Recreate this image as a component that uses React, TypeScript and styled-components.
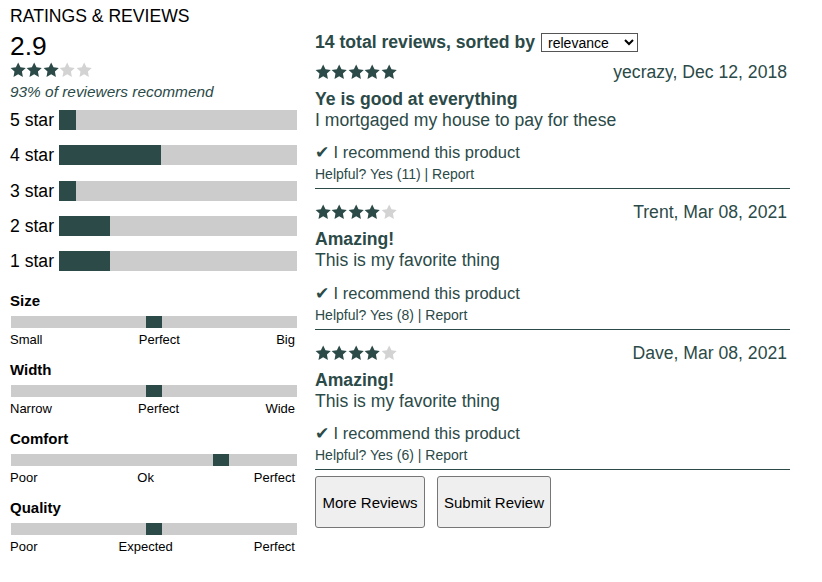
import React from "react";
import styled, { createGlobalStyle } from "styled-components";

const GREEN = "#2b4a48";
const GREY = "#cccccc";

const GlobalStyle = createGlobalStyle`
  body {
    margin: 0;
    background: #ffffff;
    font-family: "Liberation Sans", Arial, sans-serif;
  }
`;

const Page = styled.div`
  padding: 6px 10px 0 10px;
  color: #000;
`;

const Heading = styled.h2`
  margin: 0;
  font-size: 17.6px;
  line-height: 20px;
  font-weight: normal;
`;

const Columns = styled.div`
  display: grid;
  grid-template-columns: 287px 475px;
  column-gap: 18px;
  align-items: start;
`;

const Left = styled.section`
  display: flex;
  flex-direction: column;
`;

const Average = styled.div`
  margin-top: 5px;
  font-size: 26.4px;
  line-height: 30px;
`;

const StarRow = styled.div<{ $top?: number }>`
  display: flex;
  margin-top: ${(p) => p.$top ?? 0}px;
  height: 16px;
`;

const StarSvg = styled.svg<{ $on: boolean }>`
  width: 16.4px;
  height: 16px;
  fill: ${(p) => (p.$on ? GREEN : "#d3d3d3")};
`;

const Recommend = styled.div`
  margin-top: 5px;
  font-size: 15.4px;
  line-height: 18px;
  font-style: italic;
  color: ${GREEN};
`;

const Breakdown = styled.div`
  margin-top: 9px;
  display: grid;
  grid-template-columns: 49px 1fr;
  row-gap: 15.25px;
  align-items: center;
`;

const BreakLabel = styled.span`
  font-size: 17.6px;
  line-height: 20px;
`;

const Track = styled.div<{ $h: number }>`
  position: relative;
  height: ${(p) => p.$h}px;
  background: ${GREY};
`;

const Fill = styled.div`
  height: 100%;
  background: ${GREEN};
`;

const Chars = styled.div`
  margin-top: 21px;
  display: flex;
  flex-direction: column;
  gap: 14.5px;
  padding-left: 1px;
`;

const Char = styled.div`
  display: flex;
  flex-direction: column;
`;

const CharName = styled.div`
  font-size: 15px;
  line-height: 18px;
  font-weight: bold;
  margin-left: -1px;
`;

const CharTrack = styled(Track)`
  margin-top: 6px;
`;

const Marker = styled.div`
  position: absolute;
  top: 0;
  width: 16px;
  height: 100%;
  margin-left: -8px;
  background: ${GREEN};
`;

const CharLabels = styled.div`
  margin-top: 3.5px;
  margin-left: -1px;
  margin-right: 2px;
  display: flex;
  justify-content: space-between;
  font-size: 13px;
  line-height: 15px;
`;

const Right = styled.section`
  display: flex;
  flex-direction: column;
  color: ${GREEN};
`;

const ListHeader = styled.div`
  margin-top: 6.5px;
  height: 20px;
  display: flex;
  align-items: center;
  gap: 6px;
  font-size: 17.6px;
  font-weight: bold;
`;

const Sort = styled.select`
  width: 97px;
  height: 19px;
  font-family: "Liberation Sans", Arial, sans-serif;
  font-size: 14px;
  color: #000;
  background: #fff;
  border: 1px solid #555;
  border-radius: 0;
  padding: 0 2px;
`;

const Review = styled.article`
  padding: 13px 0 6px 0;
  border-bottom: 1px solid ${GREEN};
  &:first-of-type {
    padding-top: 9px;
  }
`;

const ReviewTop = styled.div`
  height: 20px;
  display: flex;
  align-items: center;
  justify-content: space-between;
  padding-right: 3px;
`;

const Author = styled.span`
  font-size: 17.6px;
  line-height: 20px;
`;

const Summary = styled.div`
  margin-top: 7px;
  font-size: 17.6px;
  line-height: 21px;
  font-weight: bold;
`;

const Body = styled.div`
  font-size: 17.6px;
  line-height: 21px;
`;

const Recommended = styled.div`
  margin-top: 11.5px;
  font-size: 16.5px;
  line-height: 20px;
`;

const Helpful = styled.div`
  margin-top: 4px;
  font-size: 14px;
  line-height: 16px;
`;

const Buttons = styled.div`
  margin-top: 6px;
  display: flex;
  gap: 12px;
`;

const Button = styled.button<{ $w: number }>`
  width: ${(p) => p.$w}px;
  height: 52px;
  background: #efefef;
  border: 1px solid #767676;
  border-radius: 3px;
  font-family: "Liberation Sans", Arial, sans-serif;
  font-size: 15px;
  color: #000;
  padding: 0;
`;

const STAR = "M12 1.2l3.3 6.9 7.5 1-5.5 5.2 1.4 7.5L12 18.2l-6.7 3.6 1.4-7.5L1.2 9.1l7.5-1z";

const Stars = ({ value, top }: { value: number; top?: number }) => (
  <StarRow $top={top}>
    {[1, 2, 3, 4, 5].map((n) => (
      <StarSvg key={n} $on={n <= value} viewBox="0.6 0.6 22.8 22.8">
        <path d={STAR} />
      </StarSvg>
    ))}
  </StarRow>
);

const breakdown = [
  { label: "5 star", count: 1 },
  { label: "4 star", count: 6 },
  { label: "3 star", count: 1 },
  { label: "2 star", count: 3 },
  { label: "1 star", count: 3 },
];

const characteristics = [
  { name: "Size", pos: 50, labels: ["Small", "Perfect", "Big"] },
  { name: "Width", pos: 50, labels: ["Narrow", "Perfect", "Wide"] },
  { name: "Comfort", pos: 73.5, labels: ["Poor", "Ok", "Perfect"] },
  { name: "Quality", pos: 50, labels: ["Poor", "Expected", "Perfect"] },
];

const reviews = [
  {
    id: 1,
    rating: 5,
    author: "yecrazy, Dec 12, 2018",
    summary: "Ye is good at everything",
    body: "I mortgaged my house to pay for these",
    helpful: 11,
  },
  {
    id: 2,
    rating: 4,
    author: "Trent, Mar 08, 2021",
    summary: "Amazing!",
    body: "This is my favorite thing",
    helpful: 8,
  },
  {
    id: 3,
    rating: 4,
    author: "Dave, Mar 08, 2021",
    summary: "Amazing!",
    body: "This is my favorite thing",
    helpful: 6,
  },
];

const App = () => {
  const total = breakdown.reduce((s, b) => s + b.count, 0);

  return (
    <Page>
      <GlobalStyle />
      <Heading>RATINGS &amp; REVIEWS</Heading>
      <Columns>
        <Left>
          <Average>2.9</Average>
          <Stars value={3} top={1} />
          <Recommend>93% of reviewers recommend</Recommend>
          <Breakdown>
            {breakdown.map((b) => (
              <React.Fragment key={b.label}>
                <BreakLabel>{b.label}</BreakLabel>
                <Track $h={20}>
                  <Fill style={{ width: `${(b.count / total) * 100}%` }} />
                </Track>
              </React.Fragment>
            ))}
          </Breakdown>
          <Chars>
            {characteristics.map((c) => (
              <Char key={c.name}>
                <CharName>{c.name}</CharName>
                <CharTrack $h={12}>
                  <Marker style={{ left: `${c.pos}%` }} />
                </CharTrack>
                <CharLabels>
                  {c.labels.map((l) => (
                    <span key={l}>{l}</span>
                  ))}
                </CharLabels>
              </Char>
            ))}
          </Chars>
        </Left>
        <Right>
          <ListHeader>
            {total} total reviews, sorted by
            <Sort defaultValue="relevance">
              <option value="relevance">relevance</option>
              <option value="newest">newest</option>
              <option value="helpful">helpful</option>
            </Sort>
          </ListHeader>
          {reviews.map((r) => (
            <Review key={r.id}>
              <ReviewTop>
                <Stars value={r.rating} />
                <Author>{r.author}</Author>
              </ReviewTop>
              <Summary>{r.summary}</Summary>
              <Body>{r.body}</Body>
              <Recommended>✔ I recommend this product</Recommended>
              <Helpful>Helpful? Yes ({r.helpful}) | Report</Helpful>
            </Review>
          ))}
          <Buttons>
            <Button $w={110}>More Reviews</Button>
            <Button $w={114}>Submit Review</Button>
          </Buttons>
        </Right>
      </Columns>
    </Page>
  );
};

export default App;
